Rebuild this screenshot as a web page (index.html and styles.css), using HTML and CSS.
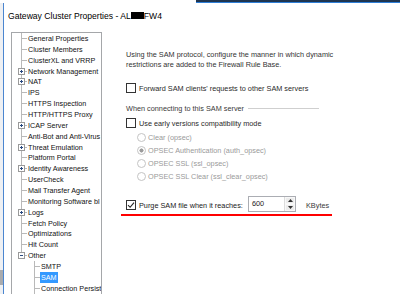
FILE: index.html
```html
<!DOCTYPE html>
<html lang="en">
<head>
    <meta charset="UTF-8">
    <meta name="viewport" content="width=device-width, initial-scale=1.0">
    <title>Gateway Cluster Properties</title>
    <link rel="stylesheet" href="styles.css">
</head>
<body>
    <div class="strip"><span class="behind"></span></div>
    <div class="screen">
        <div class="gutter"></div>
        <div class="dialog">
            <div class="titlebar">Gateway Cluster Properties - AL<span class="redact"></span>FW4</div>
            <div class="dialog-body">
                <div class="tree">
                    <div class="node"><span class="twig"></span>General Properties</div>
                    <div class="node"><span class="twig"></span>Cluster Members</div>
                    <div class="node"><span class="twig"></span>ClusterXL and VRRP</div>
                    <div class="node"><span class="twig"><span class="exp plus"></span></span>Network Management</div>
                    <div class="node"><span class="twig"><span class="exp plus"></span></span>NAT</div>
                    <div class="node"><span class="twig"></span>IPS</div>
                    <div class="node"><span class="twig"></span>HTTPS Inspection</div>
                    <div class="node"><span class="twig"></span>HTTP/HTTPS Proxy</div>
                    <div class="node"><span class="twig"><span class="exp plus"></span></span>ICAP Server</div>
                    <div class="node"><span class="twig"></span>Anti-Bot and Anti-Virus</div>
                    <div class="node"><span class="twig"><span class="exp plus"></span></span>Threat Emulation</div>
                    <div class="node"><span class="twig"></span>Platform Portal</div>
                    <div class="node"><span class="twig"><span class="exp plus"></span></span>Identity Awareness</div>
                    <div class="node"><span class="twig"></span>UserCheck</div>
                    <div class="node"><span class="twig"></span>Mail Transfer Agent</div>
                    <div class="node"><span class="twig"></span>Monitoring Software bl</div>
                    <div class="node"><span class="twig"><span class="exp plus"></span></span>Logs</div>
                    <div class="node"><span class="twig"></span>Fetch Policy</div>
                    <div class="node"><span class="twig"></span>Optimizations</div>
                    <div class="node"><span class="twig"></span>Hit Count</div>
                    <div class="node last"><span class="twig"><span class="exp"></span></span>Other</div>
                    <div class="node child"><span class="twig"></span>SMTP</div>
                    <div class="node child"><span class="twig"></span><span class="selected">SAM</span></div>
                    <div class="node child"><span class="twig"></span>Connection Persist</div>
                </div>

                <div class="pane">
                    <p class="intro">Using the SAM protocol, configure the manner in which dynamic<br>restrictions are added to the Firewall Rule Base.</p>

                    <div class="check-row forward"><span class="box"></span>Forward SAM clients' requests to other SAM servers</div>

                    <div class="group-title"><span>When connecting to this SAM server</span><span class="rule"></span></div>

                    <div class="check-row early"><span class="box"></span>Use early versions compatibility mode</div>

                    <div class="radios">
                        <div class="radio-row"><span class="dot"></span>Clear (opsec)</div>
                        <div class="radio-row"><span class="dot on"></span>OPSEC Authentication (auth_opsec)</div>
                        <div class="radio-row"><span class="dot"></span>OPSEC SSL (ssl_opsec)</div>
                        <div class="radio-row"><span class="dot"></span>OPSEC SSL Clear (ssl_clear_opsec)</div>
                    </div>

                    <div class="purge">
                        <span class="purge-label">
                            <span class="box checked">
                                <svg width="8" height="8" viewBox="0 0 8 8"><path d="M1 4.2 L3.1 6.3 L7 1.6" fill="none" stroke="#222" stroke-width="1.1"/></svg>
                            </span>Purge SAM file when it reaches:
                        </span>
                        <span class="spin">
                            <span class="spin-value">600</span>
                            <span class="spin-buttons">
                                <span class="spin-btn"><svg width="5" height="3" viewBox="0 0 5 3"><path d="M0 3 L2.5 0 L5 3 Z" fill="#333"/></svg></span>
                                <span class="spin-btn"><svg width="5" height="3" viewBox="0 0 5 3"><path d="M0 0 L2.5 3 L5 0 Z" fill="#333"/></svg></span>
                            </span>
                        </span>
                        <span class="unit">KBytes</span>
                    </div>
                </div>
            </div>
        </div>
    </div>
</body>
</html>
```

FILE: styles.css
```css
body {
    margin: 0;
    width: 400px;
    height: 294px;
    overflow: hidden;
    background: #ffffff;
    font-family: "Liberation Sans", Arial, sans-serif;
    color: #1a1a1a;
}
.strip {
    display: flex;
    height: 3px;
    background: #ffffff;
}
.behind {
    margin-left: 196px;
    flex: 1;
    background: #1f3550;
    border-bottom: 1px solid #2f7fd8;
}
.screen {
    display: flex;
    height: 291px;
}
.gutter {
    width: 3px;
    background: linear-gradient(to bottom, #eef0f3 267px, #a9abae 267px, #a9abae 282px, #eef0f3 282px);
}
.dialog {
    flex: 1;
    background: #ffffff;
    border-left: 1px solid #4b86d0;
}
.titlebar {
    height: 25px;
    padding-left: 4px;
    font-size: 8.6px;
    color: #000;
    display: flex;
    align-items: center;
}
.redact {
    display: inline-block;
    width: 13px;
    height: 7px;
    background: #000;
}
.dialog-body {
    display: flex;
    align-items: flex-start;
}

/* tree */
.tree {
    margin-left: 7px;
    margin-top: 4px;
    width: 89px;
    height: 270px;
    overflow: hidden;
    border: 1px solid #a5a7aa;
    border-bottom: none;
    font-size: 7.2px;
    color: #111;
    white-space: nowrap;
}
.node {
    display: flex;
    align-items: center;
    height: 10.87px;
}
.twig {
    flex: none;
    width: 16px;
    align-self: stretch;
    display: flex;
    align-items: center;
    background:
        linear-gradient(#b9b9b9, #b9b9b9) 9px 0 / 1px 100% no-repeat,
        linear-gradient(#b9b9b9, #b9b9b9) 9px 50% / 6px 1px no-repeat;
}
.node.last .twig {
    background:
        linear-gradient(#b9b9b9, #b9b9b9) 9px 0 / 1px 50% no-repeat,
        linear-gradient(#b9b9b9, #b9b9b9) 9px 50% / 6px 1px no-repeat;
}
.node.child .twig {
    width: 29px;
    background:
        linear-gradient(#b9b9b9, #b9b9b9) 22px 0 / 1px 100% no-repeat,
        linear-gradient(#b9b9b9, #b9b9b9) 22px 50% / 6px 1px no-repeat;
}
.exp {
    margin-left: 6px;
    width: 5px;
    height: 5px;
    border: 1px solid #9a9a9a;
    background:
        linear-gradient(#2a4a80, #2a4a80) center / 3px 1px no-repeat,
        #ffffff;
}
.exp.plus {
    background:
        linear-gradient(#2a4a80, #2a4a80) center / 3px 1px no-repeat,
        linear-gradient(#2a4a80, #2a4a80) center / 1px 3px no-repeat,
        #ffffff;
}
.selected {
    background: #3399ff;
    color: #ffffff;
    padding: 1px 1px;
    margin-left: -1px;
}

/* right pane */
.pane {
    padding-left: 24px;
    padding-top: 22px;
    font-size: 7.3px;
    color: #2a2a2a;
}
.intro {
    margin: 0;
    line-height: 10px;
    color: #333;
}
.check-row {
    display: flex;
    align-items: center;
    height: 12px;
}
.forward {
    margin-top: 12px;
}
.early {
    margin-top: 4px;
}
.box {
    flex: none;
    width: 8px;
    height: 8px;
    border: 1px solid #333;
    background: #fff;
    margin-right: 3px;
    display: inline-flex;
    align-items: center;
    justify-content: center;
}
.group-title {
    display: flex;
    align-items: center;
    height: 10px;
    margin-top: 9px;
    color: #3a3a3a;
}
.rule {
    width: 71px;
    height: 1px;
    margin-left: 4px;
    background: #cfcfcf;
}
.radios {
    margin-top: 1.5px;
    padding-left: 11px;
    color: #9a9a9a;
}
.radio-row {
    display: flex;
    align-items: center;
    height: 13px;
}
.dot {
    flex: none;
    width: 7px;
    height: 7px;
    border: 1px solid #c4c4c4;
    border-radius: 50%;
    margin-right: 2px;
    background: #fff;
}
.dot.on {
    background: radial-gradient(circle, #9c9c9c 0 1.8px, #fff 2.3px);
}
.purge {
    display: flex;
    align-items: center;
    height: 18px;
    width: 206px;
    margin-top: 13.5px;
    margin-left: -5px;
    padding-left: 5px;
    border-bottom: 2px solid #ff0000;
}
.purge-label {
    display: flex;
    align-items: center;
    width: 122px;
    color: #1a1a1a;
}
.spin {
    display: flex;
    width: 46px;
    height: 14px;
    border: 1px solid #abadb3;
    margin-top: -2px;
}
.spin-value {
    flex: 1;
    padding-left: 3px;
    line-height: 13px;
    color: #1a1a1a;
}
.spin-buttons {
    width: 10px;
    display: flex;
    flex-direction: column;
    border-left: 1px solid #dcdcdc;
}
.spin-btn {
    flex: 1;
    display: flex;
    align-items: center;
    justify-content: center;
    background: #ececec;
    border: 1px solid #f8f8f8;
}
.unit {
    margin-left: 10px;
    margin-top: 1px;
    color: #3a3a3a;
}
```
